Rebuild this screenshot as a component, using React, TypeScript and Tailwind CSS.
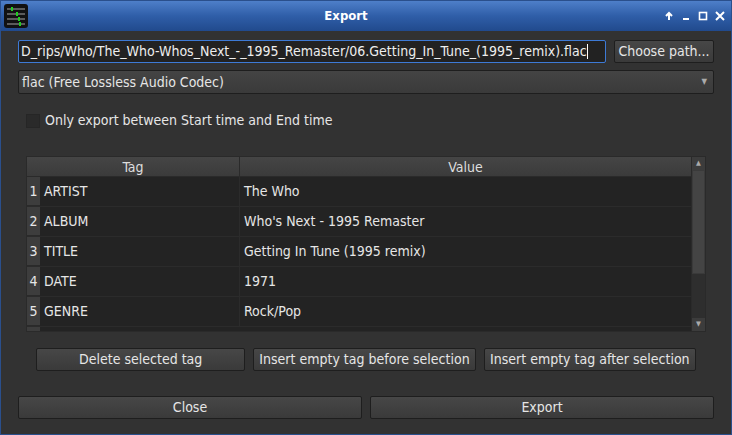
import React from "react";

const font = { fontFamily: '"DejaVu Sans Condensed","DejaVu Sans",sans-serif', fontStretch: "condensed" as const };

const rows = [
  ["1", "ARTIST", "The Who"],
  ["2", "ALBUM", "Who's Next - 1995 Remaster"],
  ["3", "TITLE", "Getting In Tune (1995 remix)"],
  ["4", "DATE", "1971"],
  ["5", "GENRE", "Rock/Pop"],
];

const Btn = ({ children, className = "" }: { children: React.ReactNode; className?: string }) => (
  <div className={`flex items-center justify-center rounded-[2px] border border-[#1e1e1e] bg-gradient-to-b from-[#474747] to-[#3a3a3a] text-[14px] text-[#e6e6e6] whitespace-nowrap overflow-hidden ${className}`}>
    {children}
  </div>
);

export default function App() {
  return (
    <div className="w-[732px] h-[435px] flex flex-col border border-[#2a4f8c] bg-[#323232] overflow-hidden" style={font}>
      <div className="h-[30px] flex items-center px-[3px] bg-gradient-to-b from-[#4e7fc9] via-[#2f5ea8] to-[#214a8d] shrink-0">
        <svg width="24" height="24" viewBox="0 0 24 24">
          <rect x="0" y="0" width="24" height="24" rx="3" fill="#111" />
          {[5, 10, 15, 20].map((y) => (
            <line key={y} x1="3" x2="21" y1={y} y2={y} stroke="#ccc" strokeWidth="0.8" />
          ))}
          <rect x="7" y="3" width="2" height="4" fill="#2c2" />
          <rect x="12" y="8" width="2" height="4" fill="#2c2" />
          <rect x="14" y="13" width="2" height="4" fill="#2c2" />
          <rect x="15" y="18" width="2" height="4" fill="#2c2" />
        </svg>
        <div className="flex-1 text-center text-white font-bold text-[13px]">Export</div>
        <div className="flex items-center gap-[7px] pr-[3px] text-white">
          <svg width="10" height="10" viewBox="0 0 10 10"><path d="M5 9V2M2 5l3-3 3 3" stroke="white" strokeWidth="2" fill="none" /></svg>
          <svg width="10" height="10" viewBox="0 0 10 10"><rect x="2" y="7" width="6" height="2" fill="white" /></svg>
          <svg width="10" height="10" viewBox="0 0 10 10"><rect x="1.5" y="1.5" width="7" height="7" stroke="white" strokeWidth="1.6" fill="none" /></svg>
          <svg width="10" height="10" viewBox="0 0 10 10"><path d="M1 1l8 8M9 1L1 9" stroke="white" strokeWidth="2" /></svg>
        </div>
      </div>
      <div className="flex-1 flex flex-col px-[17px] pt-[9px]">
        <div className="flex gap-[8px] h-[23px]">
          <div className="flex-1 flex items-center overflow-hidden rounded-[2px] border border-[#3d7ad6] bg-[#222] px-[2px] text-[14px] text-[#eee] whitespace-nowrap">
            D_rips/Who/The_Who-Whos_Next_-_1995_Remaster/06.Getting_In_Tune_(1995_remix).flac<span className="w-px h-[15px] bg-white shrink-0" />
          </div>
          <Btn className="w-[100px]">Choose path...</Btn>
        </div>
        <div className="mt-[7px] h-[24px] flex items-center justify-between rounded-[2px] border border-[#1e1e1e] bg-gradient-to-b from-[#444] to-[#3a3a3a] pl-[3px] pr-[6px] text-[14px] text-[#e6e6e6]">
          <span>flac (Free Lossless Audio Codec)</span>
          <span className="text-[8px] text-[#aaa]">▼</span>
        </div>
        <div className="mt-[16px] ml-[8px] flex items-center gap-[5px] text-[14px] text-[#e6e6e6]">
          <div className="w-[14px] h-[14px] bg-[#2a2a2a] border border-[#262626]" />
          Only export between Start time and End time
        </div>
        <div className="mt-[25px] mx-[8px] h-[176px] flex border border-[#2a2a2a] bg-[#232323]">
          <div className="flex-1 flex flex-col overflow-hidden">
            <div className="h-[20px] flex text-[14px] text-[#ddd] bg-gradient-to-b from-[#454545] to-[#3b3b3b] border-b border-[#2a2a2a] shrink-0">
              <div className="w-[213px] text-center border-r border-[#2a2a2a]">Tag</div>
              <div className="flex-1 text-center">Value</div>
            </div>
            {rows.map(([n, t, v]) => (
              <div key={n} className="h-[30px] flex text-[14px] text-[#e6e6e6] border-b border-[#2b2b2b] shrink-0">
                <div className="w-[13px] bg-[#3d3d3d] flex items-end justify-center pb-[3px] border-b border-[#2a2a2a]">{n}</div>
                <div className="w-[200px] pl-[4px] pt-[4px] border-r border-[#2b2b2b]">{t}</div>
                <div className="flex-1 pl-[4px] pt-[4px]">{v}</div>
              </div>
            ))}
            <div className="w-[13px] h-[6px] bg-[#3d3d3d]" />
          </div>
          <div className="w-[14px] flex flex-col bg-[#2e2e2e] border-l border-[#2a2a2a]">
            <div className="h-[13px] flex items-center justify-center text-[7px] text-[#aaa] bg-[#3c3c3c]">▲</div>
            <div className="h-[104px] bg-[#444] border border-[#3a3a3a]" />
            <div className="flex-1" />
            <div className="h-[13px] flex items-center justify-center text-[7px] text-[#aaa] bg-[#3c3c3c]">▼</div>
          </div>
        </div>
        <div className="mt-[16px] mx-[18px] flex gap-[8px] h-[23px]">
          <Btn className="w-[210px]">Delete selected tag</Btn>
          <Btn className="w-[223px]">Insert empty tag before selection</Btn>
          <Btn className="w-[213px]">Insert empty tag after selection</Btn>
        </div>
        <div className="mt-[25px] flex gap-[8px] h-[23px]">
          <Btn className="flex-1">Close</Btn>
          <Btn className="flex-1">Export</Btn>
        </div>
      </div>
    </div>
  );
}
